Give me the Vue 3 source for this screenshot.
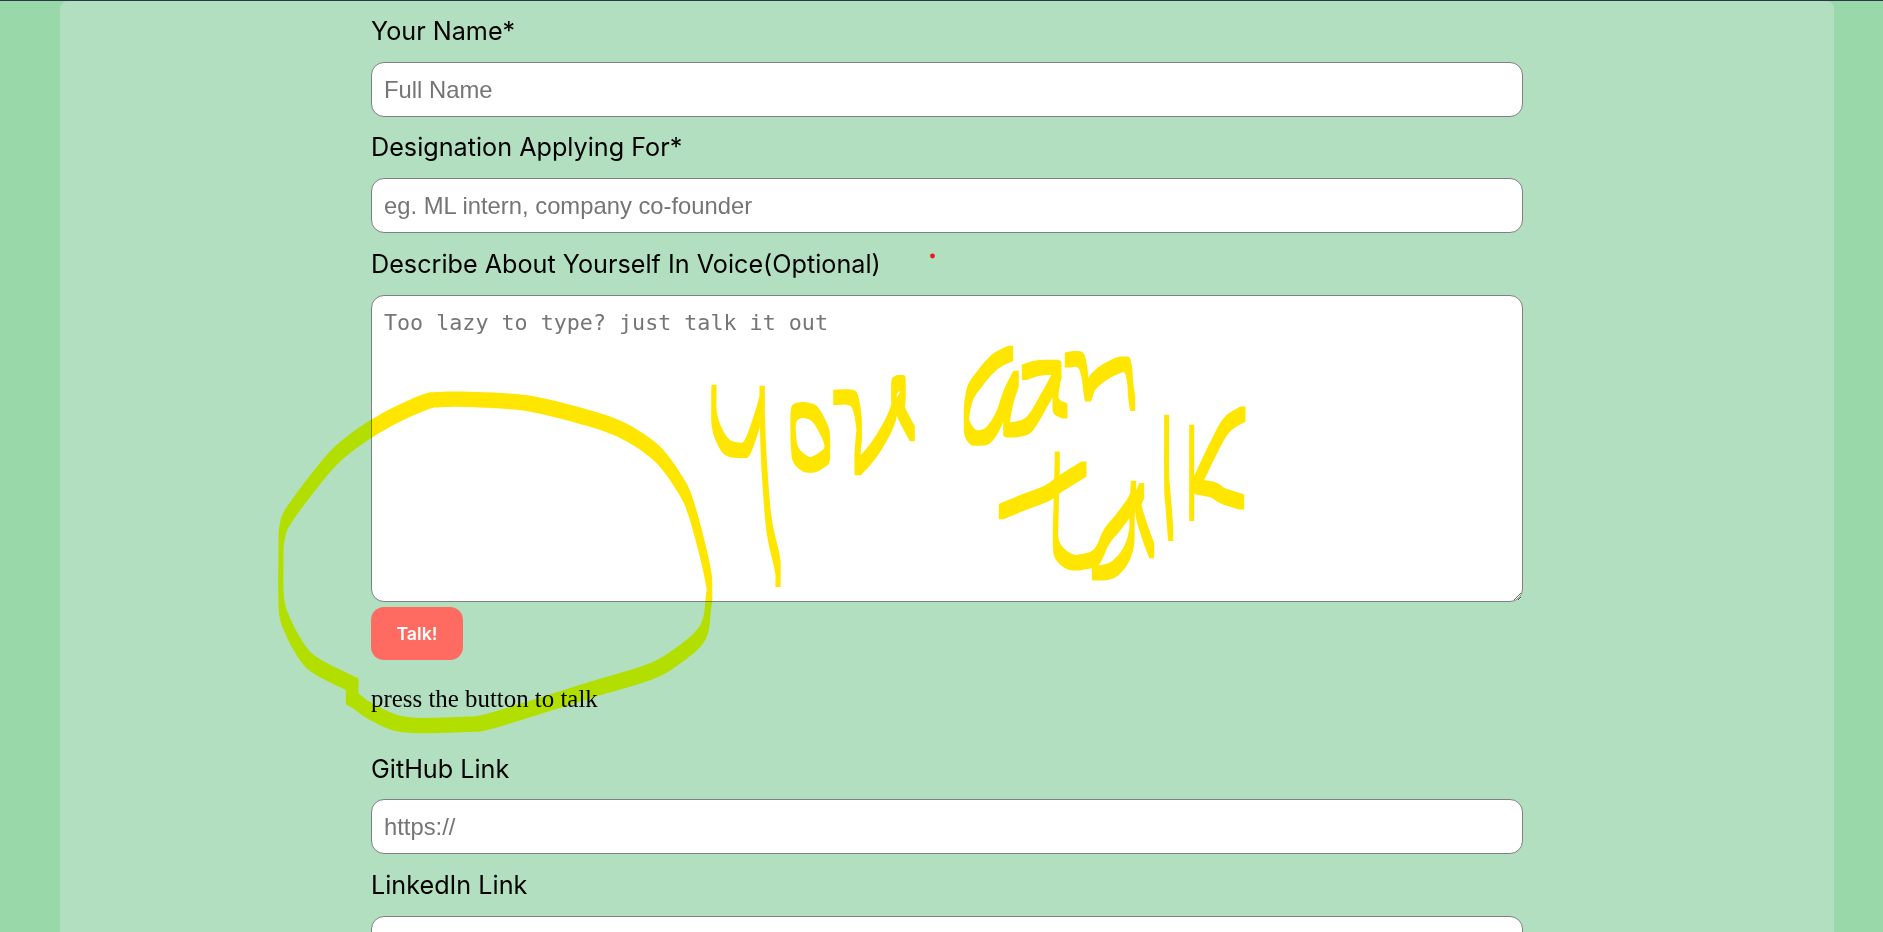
<script setup>
const NIB_W = 5
const NIB_H = 15.2

// Pen strokes traced from the reference; each group is [offsetX, offsetY, strokes], points are at 3x.
const groups = [
  [260, 370, [
    [[265,980],[290,995],[337,1027],[435,1064],[620,1063],[680,1056],[800,1020],[1000,957],[1165,907],[1250,860],[1327,790],[1345,700],[1345,620],[1295,420],[1255,335],[1190,250],[1095,185],[995,147],[845,108],[760,95],[620,88],[535,89],[495,96],[405,136],[335,176],[262,227],[197,290],[90,430],[66,490],[63,560],[64,700],[82,765],[125,845],[167,887],[250,930],[288,948]]
  ]],
  [690, 330, [
    [[72,187],[72,260],[85,310],[112,352],[152,361],[172,352],[197,285],[216,220],[216,194],[218,300],[224,430],[238,590],[262,700],[264,748]],
    [[340,239],[372,250],[395,285],[411,325],[411,372],[395,390],[365,405],[340,398],[318,375],[311,340],[311,255],[340,239]],
    [[437,202],[480,202],[497,220],[508,290],[505,340],[501,405],[513,405],[565,340],[610,250],[611,180],[620,162],[638,162],[638,205],[628,232],[645,270],[667,311]],
    [[962,70],[915,95],[870,145],[838,197],[829,280],[845,318],[866,324],[895,315],[925,270],[950,200],[979,145],[962,200],[950,270],[950,297],[985,297],[1020,280],[1060,215],[1103,135],[1103,115],[1085,112],[1040,115],[1003,127]],
    [[1103,135],[1098,175],[1097,225],[1125,243]],
    [[934,545],[1000,517],[1070,490],[1110,462],[1182,417]]
  ]],
  [1040, 340, [
    [[82,60],[118,58],[132,90],[143,162],[160,125],[205,90],[255,72],[268,100],[272,150],[278,190]]
  ]],
  [1000, 380, [
    [[172,237],[168,400],[167,490],[182,525],[215,547],[250,545],[290,530],[320,470],[360,420],[397,365],[400,325],[396,400],[395,470],[378,525],[345,565],[310,578],[283,578]],
    [[425,332],[413,375],[431,445],[455,512]],
    [[500,127],[500,300],[505,370],[512,460]],
    [[575,157],[575,400]],
    [[729,102],[680,135],[640,205],[595,300],[590,318],[640,330],[670,348],[725,366]]
  ]]
]

function smooth(pts) {
  const out = []
  for (let i = 0; i < pts.length - 1; i++) {
    const p0 = pts[Math.max(i - 1, 0)]
    const p1 = pts[i]
    const p2 = pts[i + 1]
    const p3 = pts[Math.min(i + 2, pts.length - 1)]
    for (let s = 0; s < 6; s++) {
      const t = s / 6
      const f = (a, b, c, d) =>
        0.5 * (2 * b + (c - a) * t + (2 * a - 5 * b + 4 * c - d) * t * t + (3 * b - a - 3 * c + d) * t * t * t)
      out.push([f(p0[0], p1[0], p2[0], p3[0]), f(p0[1], p1[1], p2[1], p3[1])])
    }
  }
  out.push(pts[pts.length - 1])
  return out
}

function hull(points) {
  const p = [...points].sort((a, b) => a[0] - b[0] || a[1] - b[1])
  const cross = (o, a, b) => (a[0] - o[0]) * (b[1] - o[1]) - (a[1] - o[1]) * (b[0] - o[0])
  const half = (list) => {
    const h = []
    for (const q of list) {
      while (h.length > 1 && cross(h[h.length - 2], h[h.length - 1], q) <= 0) h.pop()
      h.push(q)
    }
    h.pop()
    return h
  }
  return [...half(p), ...half([...p].reverse())]
}

function corners([x, y]) {
  const w = NIB_W / 2
  const h = NIB_H / 2
  return [[x - w, y - h], [x + w, y - h], [x + w, y + h], [x - w, y + h]]
}

function sweep(pts) {
  const dense = smooth(pts)
  let d = ''
  for (let i = 0; i < dense.length - 1; i++) {
    const poly = hull([...corners(dense[i]), ...corners(dense[i + 1])])
    d += 'M' + poly.map((q) => q[0].toFixed(1) + ' ' + q[1].toFixed(1)).join('L') + 'Z'
  }
  return d
}

const inkPath = groups
  .flatMap(([ox, oy, strokes]) =>
    strokes.map((s) => sweep(s.map(([x, y]) => [ox + x / 3, oy + y / 3])))
  )
  .join('')
</script>

<template>
  <div class="page">
    <main class="panel">
      <form class="form" @submit.prevent>
        <label class="label" for="name">Your Name*</label>
        <input id="name" class="field" type="text" placeholder="Full Name" />

        <label class="label" for="role">Designation Applying For*</label>
        <input id="role" class="field" type="text" placeholder="eg. ML intern, company co-founder" />

        <label class="label lowered" for="about">Describe About Yourself In Voice(Optional)</label>
        <textarea id="about" class="area" placeholder="Too lazy to type? just talk it out"></textarea>

        <button class="talk" type="button">Talk!</button>
        <p class="hint">press the button to talk</p>

        <label class="label github" for="github">GitHub Link</label>
        <input id="github" class="field" type="text" placeholder="https://" />

        <label class="label lowered" for="linkedin">LinkedIn Link</label>
        <input id="linkedin" class="field" type="text" />
      </form>
    </main>

    <svg class="ink" width="1883" height="932" viewBox="0 0 1883 932" aria-hidden="true">
      <path :d="inkPath" fill="#ffe600" />
    </svg>
    <svg class="dot" width="1883" height="932" viewBox="0 0 1883 932" aria-hidden="true">
      <circle cx="932.5" cy="256" r="2.4" fill="#f01818" />
    </svg>
  </div>
</template>

<style scoped>
.page {
  position: relative;
  height: 932px;
  overflow: hidden;
  box-sizing: border-box;
  border-top: 1px solid #2d3748;
  background: #99d9a9;
  padding: 0 49px 0 60px;
}
.panel {
  height: 100%;
  background: #b2dfc0;
  border-radius: 8px 8px 0 0;
}
.form {
  display: flex;
  flex-direction: column;
  align-items: flex-start;
  width: 1152px;
  margin-left: 311px;
  padding-top: 15px;
}
.label {
  display: block;
  height: 30px;
  line-height: 30px;
  margin-bottom: 16px;
  font-family: Inter, sans-serif;
  font-size: 25.2px;
  color: #000;
}
.label.lowered {
  margin-top: 1px;
}
.label.github {
  margin-bottom: 15.5px;
}
.field,
.area {
  box-sizing: border-box;
  width: 100%;
  margin: 0 0 15.5px;
  border: 1px solid #808080;
  border-radius: 13px;
  background: #fff;
  padding: 0 12px;
  outline: none;
}
.field {
  height: 54.5px;
  padding-top: 1px;
  font-family: "Liberation Sans", Arial, sans-serif;
  font-size: 23.8px;
}
.area {
  display: block;
  height: 307px;
  margin-bottom: 5px;
  padding-top: 13px;
  font-family: "DejaVu Sans Mono", monospace;
  font-size: 21.7px;
  line-height: 27px;
  resize: vertical;
}
.field::placeholder,
.area::placeholder {
  color: #757575;
  opacity: 1;
}
.talk {
  width: 92px;
  height: 53px;
  border: 0;
  border-radius: 13px;
  background: #ff6b60;
  color: #fff;
  font-family: Inter, sans-serif;
  font-weight: 600;
  font-size: 17.8px;
}
.hint {
  margin: 24px 0 39.5px;
  height: 30px;
  line-height: 30px;
  font-family: "Liberation Serif", "Times New Roman", serif;
  font-size: 24.9px;
  color: #000;
}
.ink,
.dot {
  position: absolute;
  top: -1px;
  left: 0;
  pointer-events: none;
}
.ink {
  mix-blend-mode: darken;
}
</style>
